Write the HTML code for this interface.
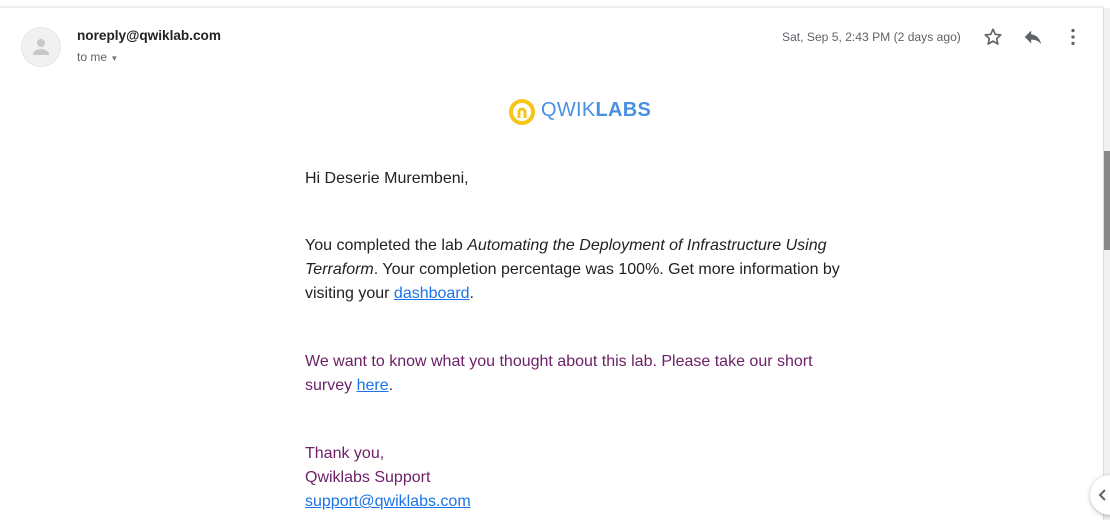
<!DOCTYPE html>
<html><head><meta charset="utf-8"><style>
body{margin:0;width:1110px;height:520px;overflow:hidden;background:#fff;font-family:"Liberation Sans",Arial,sans-serif;position:relative}
.topline{position:absolute;left:0;top:6px;width:1104px;height:2px;background:#eee}
.sb{position:absolute;left:1103px;top:8px;width:7px;height:512px;background:#f1f1f1;border-left:1px solid #ddd}
.thumb{position:absolute;left:1104px;top:151px;width:6px;height:99px;background:#888}
.av{position:absolute;left:21px;top:27px;width:40px;height:40px;border-radius:50%;background:#f1f1f1;border:1px solid #e6e6e6;box-sizing:border-box}
.from{position:absolute;left:77px;top:28px;font-size:13.6px;font-weight:bold;color:#222}
.to{position:absolute;left:77px;top:50px;font-size:12px;color:#5f6368}
.date{position:absolute;left:782px;top:30px;font-size:12.1px;color:#5f6368}
.body{position:absolute;left:305px;top:167px;font-size:16px;line-height:24px;color:#222;width:545px}
p{margin:0}
a{color:#1a73e8;text-decoration:underline}
.pur{color:#6b1f66}
.fab{position:absolute;left:1090px;top:475px;width:40px;height:40px;border-radius:50%;background:#fff;box-shadow:0 1px 4px rgba(0,0,0,.3)}
</style></head><body>
<div class="topline"></div>
<div class="av"><svg width="40" height="40" viewBox="0 0 40 40" style="position:absolute;left:-1px;top:-1px"><circle cx="20" cy="16" r="4" fill="#c8c8c8"/><path d="M12 27c0-3 5-5 8-5s8 2 8 5v1H12z" fill="#c8c8c8"/></svg></div>
<div class="from">noreply@qwiklab.com</div>
<div class="to">to me <span style="font-size:8px;color:#777">&#9660;</span></div>
<div class="date">Sat, Sep 5, 2:43 PM (2 days ago)</div>
<svg style="position:absolute;left:982px;top:26px" width="22" height="22" viewBox="0 0 24 24"><path d="M12 3.5l2.5 5.6 6 .6-4.5 4 1.3 6-5.3-3.2-5.3 3.2 1.3-6-4.5-4 6-.6z" fill="none" stroke="#5f6368" stroke-width="1.8" stroke-linejoin="round"/></svg>
<svg style="position:absolute;left:1022px;top:26px" width="22" height="22" viewBox="0 0 24 24"><path d="M10 9V5l-7 7 7 7v-4.1c5 0 8.5 1.6 11 5.1-1-5-4-10-11-11z" fill="#5f6368"/></svg>
<svg style="position:absolute;left:1062px;top:26px" width="22" height="22" viewBox="0 0 24 24"><circle cx="12" cy="5" r="1.8" fill="#5f6368"/><circle cx="12" cy="12" r="1.8" fill="#5f6368"/><circle cx="12" cy="19" r="1.8" fill="#5f6368"/></svg>
<svg style="position:absolute;left:508px;top:98px" width="28" height="28" viewBox="0 0 28 28"><circle cx="14" cy="14" r="11" fill="none" stroke="#f5c518" stroke-width="4"/><path d="M11 20v-6a3 3 0 0 1 6 0v6" fill="none" stroke="#f5c518" stroke-width="3"/></svg>
<div style="position:absolute;left:541px;top:99px;font-size:20px;color:#4a90e2;letter-spacing:0.3px">QWIK<b>LABS</b></div>
<div class="body">
<p>Hi Deserie Murembeni,</p>
<p style="margin-top:43px">You completed the lab <i>Automating the Deployment of Infrastructure Using Terraform</i>. Your completion percentage was 100%. Get more information by visiting your <a>dashboard</a>.</p>
<p class="pur" style="margin-top:44px">We want to know what you thought about this lab. Please take our short survey <a>here</a>.</p>
<p class="pur" style="margin-top:44px">Thank you,<br>Qwiklabs Support<br><a>support@qwiklabs.com</a></p>
</div>
<div class="sb"></div><div class="thumb"></div>
<div class="fab"><svg style="position:absolute;left:6px;top:12px" width="14" height="16" viewBox="0 0 14 16"><path d="M9 3L4 8l5 5" fill="none" stroke="#5f6368" stroke-width="2"/></svg></div>
</body></html>
